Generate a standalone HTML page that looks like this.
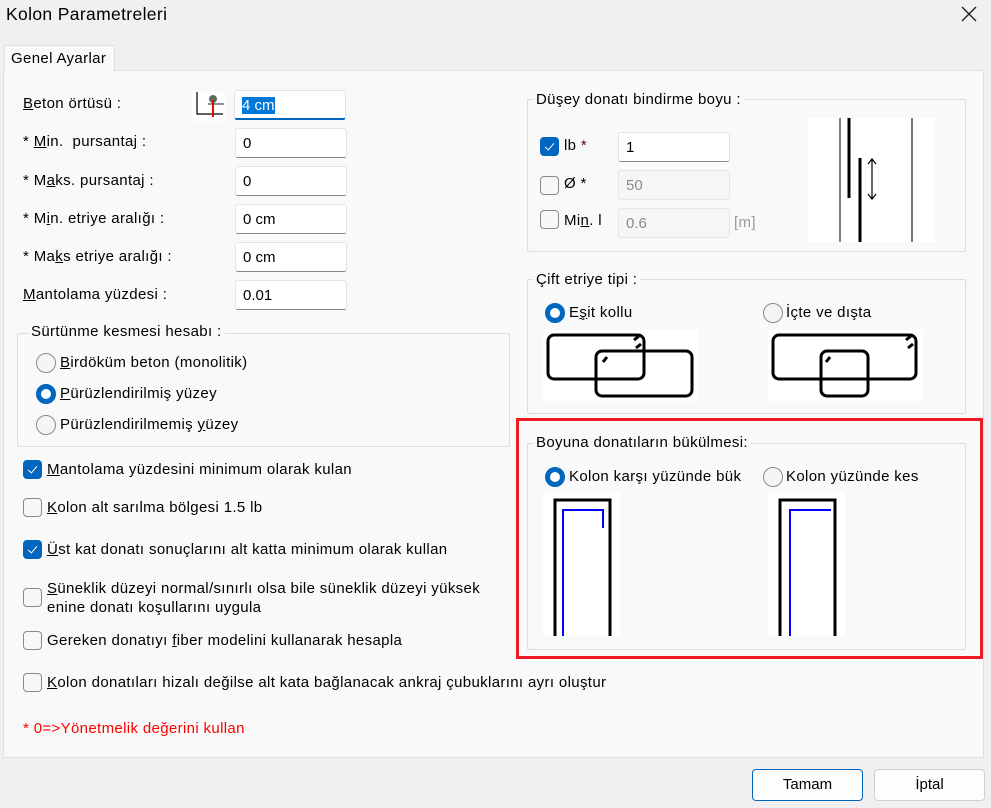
<!DOCTYPE html>
<html><head><meta charset="utf-8"><style>
*{box-sizing:border-box;margin:0;padding:0}
body{width:991px;height:808px;background:#f0f0f0;font-family:"Liberation Sans",sans-serif;font-size:15px;letter-spacing:0.35px;color:#000;position:relative;overflow:hidden}
.a{position:absolute}
.t{position:absolute;white-space:nowrap;line-height:19px}
.in{position:absolute;background:#fff;border:1px solid #e3e3e3;border-bottom:1px solid #8a8a8a;border-radius:3px;padding:6px 0 0 7px;height:30px;width:112px;letter-spacing:0}
.in.d{background:#f6f6f6;color:#8a8a8a;border-color:#e6e6e6}
.cb{position:absolute;width:19px;height:19px;border:1px solid #8a8a8a;border-radius:4px;background:#f7f7f7}
.cb.on{background:#0067c0;border-color:#0067c0}
.cb.on::after{content:"";position:absolute;left:6px;top:3px;width:4px;height:8px;border:solid #fff;border-width:0 1.3px 1.3px 0;transform:rotate(40deg)}
.rb{position:absolute;width:20px;height:20px;border:1px solid #8a8a8a;border-radius:50%;background:#f5f5f5}
.rb.on{border:5.5px solid #0067c0;background:#fff}
.gb{position:absolute;border:1px solid #dcdcdc;border-radius:2px}
.gt{position:absolute;background:#f9f9f9;padding:0 3px;white-space:nowrap;line-height:19px}
u{text-decoration:underline}
.btn{position:absolute;height:32px;width:111px;background:#fdfdfd;border:1px solid #d0d0d0;border-radius:4px;text-align:center;line-height:30px;letter-spacing:0}
</style></head><body>
<div class="t" style="left:6px;top:4px;font-size:17.5px;line-height:20px">Kolon Parametreleri</div>
<svg class="a" style="left:960px;top:5px" width="18" height="18"><path d="M2 2L16 16M16 2L2 16" stroke="#222" stroke-width="1.4"/></svg>
<div class="a" style="left:3px;top:70px;width:981px;height:688px;background:#f9f9f9;border:1px solid #e0e0e0"></div>
<div class="a" style="left:4px;top:45px;width:111px;height:27px;background:#f9f9f9;border:1px solid #e0e0e0;border-bottom:none"></div>
<div class="t" style="left:11px;top:49px">Genel Ayarlar</div>

<div class="t" style="left:23px;top:94px"><u>B</u>eton örtüsü :</div>
<svg class="a" style="left:192px;top:92px" width="33" height="29"><rect width="33" height="29" fill="#fff"/><path d="M5 0V22H31" stroke="#000" fill="none" stroke-width="1.2"/><path d="M16 12H32" stroke="#5a6a70" stroke-width="1.5"/><circle cx="21" cy="7" r="4" fill="#5c6e60"/><path d="M21 8V25" stroke="#e00" stroke-width="2"/></svg>
<div class="in" style="left:234px;top:90px;border-bottom:2px solid #0067c0"><span style="background:#0078d7;color:#fff">4 cm</span></div>
<div class="t" style="left:23px;top:132px">* <u>M</u>in.&nbsp; pursantaj :</div>
<div class="in" style="left:235px;top:128px">0</div>
<div class="t" style="left:23px;top:171px">* M<u>a</u>ks. pursantaj :</div>
<div class="in" style="left:235px;top:166px">0</div>
<div class="t" style="left:23px;top:209px">* M<u>i</u>n. etriye aralığı :</div>
<div class="in" style="left:235px;top:204px">0 cm</div>
<div class="t" style="left:23px;top:247px">* Ma<u>k</u>s etriye aralığı :</div>
<div class="in" style="left:235px;top:242px">0 cm</div>
<div class="t" style="left:23px;top:285px"><u>M</u>antolama yüzdesi :</div>
<div class="in" style="left:235px;top:280px">0.01</div>

<div class="gb" style="left:17px;top:333px;width:493px;height:114px"></div>
<div class="gt" style="left:28px;top:322px">Sürtünme kesmesi hesabı :</div>
<div class="rb" style="left:36px;top:353px"></div><div class="t" style="left:60px;top:353px"><u>B</u>irdöküm beton (monolitik)</div>
<div class="rb on" style="left:36px;top:384px"></div><div class="t" style="left:60px;top:384px"><u>P</u>ürüzlendirilmiş yüzey</div>
<div class="rb" style="left:36px;top:415px"></div><div class="t" style="left:60px;top:415px">Pürüzlendirilmemiş <u>y</u>üzey</div>

<div class="cb on" style="left:23px;top:460px"></div><div class="t" style="left:47px;top:460px"><u>M</u>antolama yüzdesini minimum olarak kulan</div>
<div class="cb" style="left:23px;top:498px"></div><div class="t" style="left:47px;top:498px"><u>K</u>olon alt sarılma bölgesi 1.5 lb</div>
<div class="cb on" style="left:23px;top:540px"></div><div class="t" style="left:47px;top:540px"><u>Ü</u>st kat donatı sonuçlarını alt katta minimum olarak kullan</div>
<div class="cb" style="left:23px;top:588px"></div><div class="t" style="left:47px;top:579px"><u>S</u>üneklik düzeyi normal/sınırlı olsa bile süneklik düzeyi yüksek<br>enine donatı koşullarını uygula</div>
<div class="cb" style="left:23px;top:631px"></div><div class="t" style="left:47px;top:631px">Gereken donatıyı <u>f</u>iber modelini kullanarak hesapla</div>
<div class="cb" style="left:23px;top:673px"></div><div class="t" style="left:47px;top:673px"><u>K</u>olon donatıları hizalı değilse alt kata bağlanacak ankraj çubuklarını ayrı oluştur</div>
<div class="t" style="left:23px;top:719px;color:#f00">* 0=&gt;Yönetmelik değerini kullan</div>

<div class="gb" style="left:527px;top:99px;width:439px;height:153px"></div>
<div class="gt" style="left:533px;top:90px">Düşey donatı bindirme boyu :</div>
<div class="cb on" style="left:540px;top:137px"></div><div class="t" style="left:564px;top:136px">lb <span style="color:#600">*</span></div>
<div class="in" style="left:618px;top:132px">1</div>
<div class="cb" style="left:540px;top:176px"></div><div class="t" style="left:564px;top:174px">Ø *</div>
<div class="in d" style="left:618px;top:170px">50</div>
<div class="cb" style="left:540px;top:210px"></div><div class="t" style="left:564px;top:211px">Mi<u>n</u>. l</div>
<div class="in d" style="left:618px;top:208px">0.6</div>
<div class="t" style="left:734px;top:213px;color:#999">[m]</div>
<svg class="a" style="left:808px;top:118px" width="126" height="124"><rect width="126" height="124" fill="#fff"/><path d="M32 0V124" stroke="#555" stroke-width="1.5"/><path d="M104 0V124" stroke="#777" stroke-width="2"/><path d="M41 0V80" stroke="#000" stroke-width="3"/><path d="M52 40V124" stroke="#000" stroke-width="3"/><path d="M64 42V80M60 46L64 41L68 46M60 76L64 81L68 76" stroke="#000" stroke-width="1.2" fill="none"/></svg>

<div class="gb" style="left:527px;top:279px;width:439px;height:135px"></div>
<div class="gt" style="left:533px;top:270px">Çift etriye tipi :</div>
<div class="rb on" style="left:545px;top:303px"></div><div class="t" style="left:569px;top:303px">E<u>ş</u>it kollu</div>
<div class="rb" style="left:763px;top:303px"></div><div class="t" style="left:786px;top:303px">İçte ve dışta</div>
<svg class="a" style="left:543px;top:330px" width="155" height="71"><rect width="155" height="71" fill="#fff"/><g fill="none" stroke="#000" stroke-width="3"><rect x="5" y="5" width="96" height="44" rx="6"/><rect x="53" y="21" width="96" height="45" rx="6"/><path d="M91 10L96 6M93 18L98 14M60 32L64 27"/></g></svg>
<svg class="a" style="left:768px;top:330px" width="155" height="71"><rect width="155" height="71" fill="#fff"/><g fill="none" stroke="#000" stroke-width="3"><rect x="5" y="5" width="143" height="44" rx="6"/><rect x="53" y="21" width="47" height="45" rx="6"/><path d="M138 10L143 6M140 18L145 14M58 32L62 27"/></g></svg>

<div class="a" style="left:516px;top:418px;width:467px;height:241px;border:3px solid #ed1c24"></div>
<div class="gb" style="left:527px;top:443px;width:439px;height:207px"></div>
<div class="gt" style="left:533px;top:433px">Boyuna donatıların bükülmesi:</div>
<div class="rb on" style="left:545px;top:467px"></div><div class="t" style="left:569px;top:467px">Kolon karşı yüzünde bük</div>
<div class="rb" style="left:763px;top:467px"></div><div class="t" style="left:786px;top:467px">Kolon yüzünde kes</div>
<svg class="a" style="left:543px;top:493px" width="77" height="143"><rect width="77" height="143" fill="#fff"/><path d="M12 143V7H67V143" stroke="#000" stroke-width="3" fill="none"/><path d="M20 143V17H60V35" stroke="#00f" stroke-width="2" fill="none"/></svg>
<svg class="a" style="left:768px;top:493px" width="77" height="143"><rect width="77" height="143" fill="#fff"/><path d="M12 143V7H67V143" stroke="#000" stroke-width="3" fill="none"/><path d="M22 143V17H63" stroke="#00f" stroke-width="2" fill="none"/></svg>

<div class="btn" style="left:752px;top:769px;border:1px solid #0067c0">Tamam</div>
<div class="btn" style="left:874px;top:769px">İptal</div>
</body></html>
